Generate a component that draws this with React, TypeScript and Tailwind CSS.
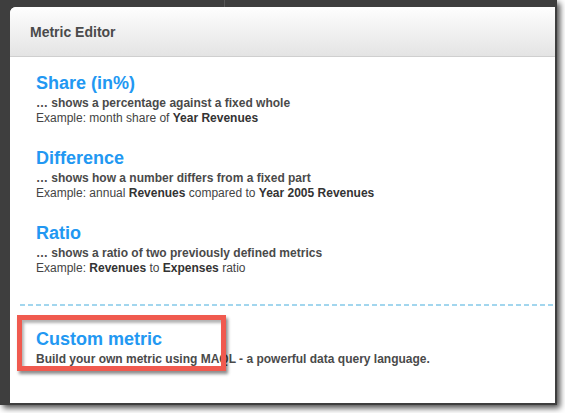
type Metric = {
  title: string;
  lead: string;
  example: React.ReactNode;
};

const metrics: Metric[] = [
  {
    title: 'Share (in%)',
    lead: '… shows a percentage against a fixed whole',
    example: (
      <>
        Example: month share of <b className="text-[#333]">Year Revenues</b>
      </>
    ),
  },
  {
    title: 'Difference',
    lead: '… shows how a number differs from a fixed part',
    example: (
      <>
        Example: annual <b className="text-[#333]">Revenues</b> compared to{' '}
        <b className="text-[#333]">Year 2005 Revenues</b>
      </>
    ),
  },
  {
    title: 'Ratio',
    lead: '… shows a ratio of two previously defined metrics',
    example: (
      <>
        Example: <b className="text-[#333]">Revenues</b> to{' '}
        <b className="text-[#333]">Expenses</b> ratio
      </>
    ),
  },
];

const MetricOption = ({ title, lead, example }: Metric) => (
  <div className="flex flex-col">
    <span className="text-[18px] leading-[22px] font-bold text-[#2298f2]">{title}</span>
    <span className="mt-[2px] text-[12px] leading-[15px] font-bold text-[#4a4a4a]">{lead}</span>
    <span className="text-[12px] leading-[15px] text-[#444]">{example}</span>
  </div>
);

export default function App() {
  return (
    <div className="min-h-screen bg-white font-['Liberation_Sans',Arial,sans-serif]">
      <div className="relative w-[557px] h-[405px] bg-[#3e3e3e] pl-[10px] pt-[7px] shadow-[3px_3px_6px_rgba(0,0,0,0.7)]">
        <div className="absolute left-[224px] top-0 h-[7px] w-px bg-[#565656]" />

        <div className="relative w-[545px] h-[396px] bg-white rounded-tl-[6px] overflow-hidden flex flex-col">
          <div className="h-[50px] shrink-0 flex items-center pl-[20px] border-b border-[#cfcfcf] bg-gradient-to-b from-[#fefefe] to-[#e4e4e4]">
            <span className="text-[14px] leading-[20px] font-bold text-[#4a4a4a]">Metric Editor</span>
          </div>

          <div className="flex flex-col gap-[21px] pt-[15px] pl-[26px]">
            {metrics.map((m) => (
              <MetricOption key={m.title} {...m} />
            ))}
          </div>

          <div className="mt-[28px] ml-[10px] h-[2px] bg-[repeating-linear-gradient(90deg,#a2d6ee_0_5px,transparent_5px_8px)]" />

          <div className="mt-[22px] pl-[26px] flex flex-col">
            <span className="text-[18px] leading-[22px] font-bold text-[#2298f2]">Custom metric</span>
            <span className="mt-[2px] text-[12px] leading-[15px] font-bold text-[#4a4a4a]">
              Build your own metric using MAQL - a powerful data query language.
            </span>
          </div>

          {/* annotation frame */}
          <div className="absolute left-[7px] top-[308px] w-[209px] h-[56px] border-[5px] border-[#f05a4f] shadow-[2px_3px_3px_rgba(0,0,0,0.45),inset_2px_3px_3px_rgba(0,0,0,0.3)]" />
        </div>
      </div>
    </div>
  );
}
